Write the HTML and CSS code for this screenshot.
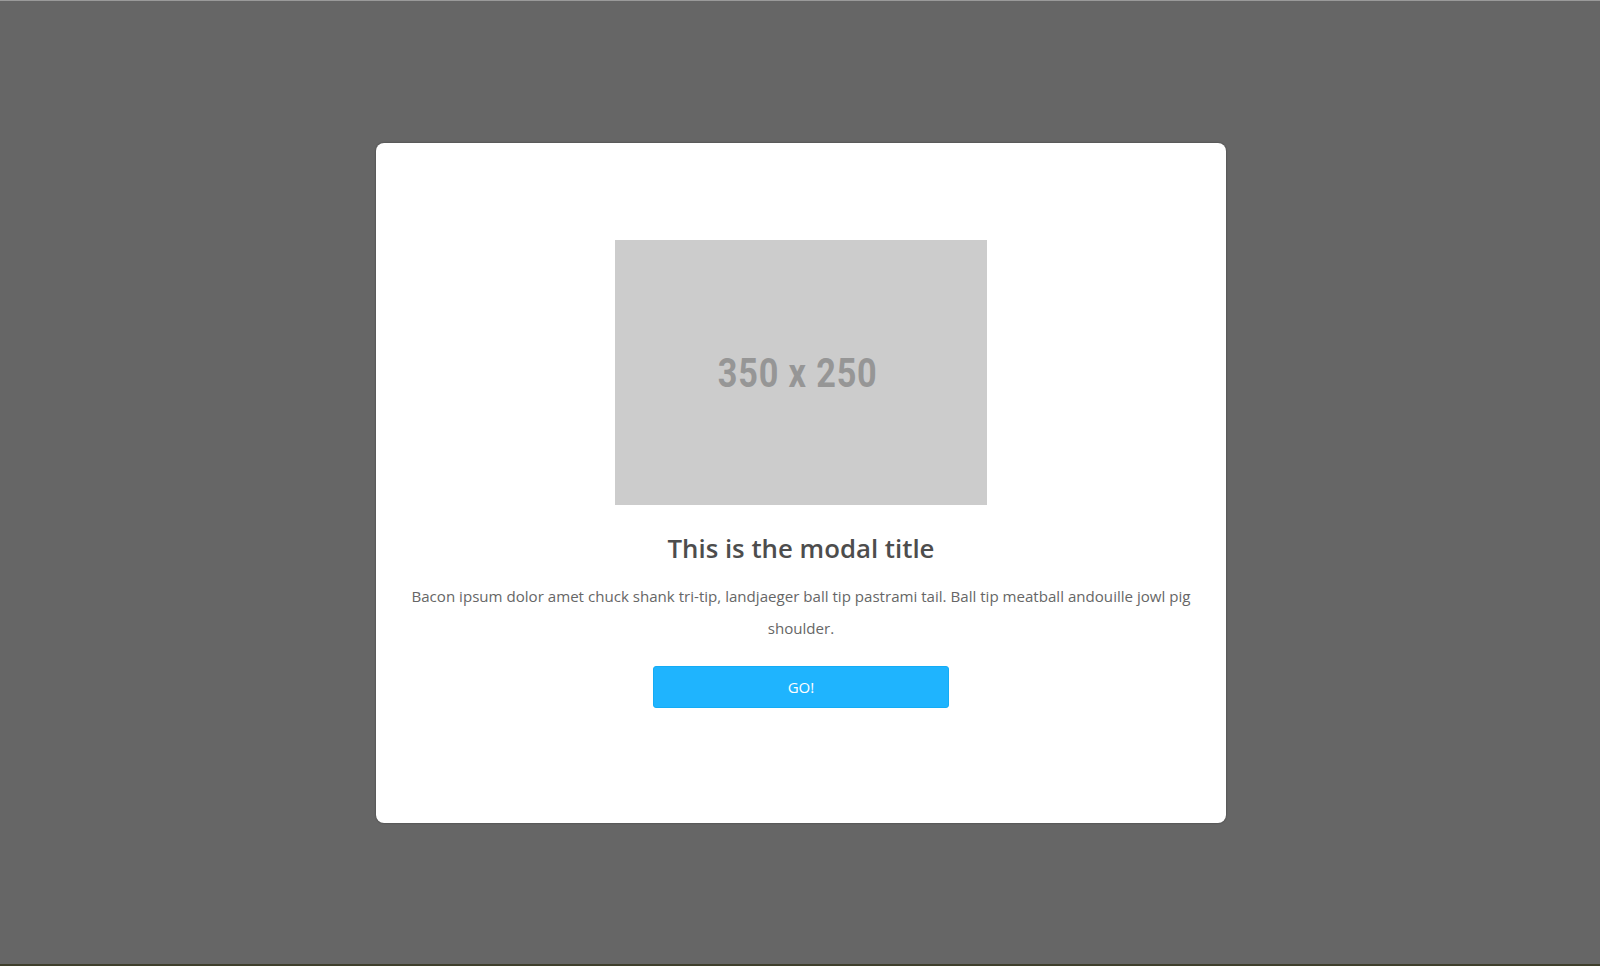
FILE: index.html
```html
<!DOCTYPE html>
<html lang="en">
<head>
<meta charset="utf-8">
<title>Modal</title>
<link rel="stylesheet" href="styles.css">
</head>
<body>
<div class="overlay">
  <div class="modal">
    <div class="placeholder"><span class="placeholder-text">350 x 250</span></div>
    <h2 class="modal-title">This is the modal title</h2>
    <p class="modal-text">Bacon ipsum dolor amet chuck shank tri-tip, landjaeger ball tip pastrami tail. Ball tip meatball andouille jowl pig shoulder.</p>
    <button class="modal-button">GO!</button>
  </div>
</div>
</body>
</html>
```
FILE: styles.css
```css
* { box-sizing: border-box; }
html, body { margin: 0; padding: 0; }
body {
  width: 1600px;
  height: 966px;
  overflow: hidden;
  background: #666666;
  font-family: "Open Sans", "Liberation Sans", sans-serif;
}
.overlay {
  width: 1600px;
  height: 966px;
  display: flex;
  align-items: center;
  justify-content: center;
  border-top: 1px solid #9a9a9a;
  border-bottom: 2px solid #3f3f2c;
}
.modal {
  width: 850px;
  height: 680px;
  background: #ffffff;
  border-radius: 8px;
  box-shadow: 0 0 2px rgba(0,0,0,0.45);
  display: flex;
  flex-direction: column;
  align-items: center;
  padding: 97px 34px 0;
  margin-left: 2px;
}
.placeholder {
  width: 372px;
  height: 265px;
  background: #cccccc;
  display: flex;
  align-items: center;
  justify-content: center;
  flex-shrink: 0;
}
.placeholder-text {
  font-family: "Roboto", "Liberation Sans", sans-serif;
  font-weight: 700;
  font-size: 41px;
  color: #969696;
  display: inline-block;
  transform: scaleX(0.835);
  letter-spacing: 1px;
  margin-left: -6px;
  margin-top: 1px;
}
.modal-title {
  margin: 24px 0 0;
  font-size: 25.8px;
  line-height: 38px;
  font-weight: 600;
  color: #4d4d4d;
  text-align: center;
}
.modal-text {
  margin: 13px 0 0;
  font-size: 15.1px;
  line-height: 32px;
  color: #666666;
  text-align: center;
}
.modal-button {
  margin-top: 22px;
  width: 296px;
  height: 42px;
  background: #1fb4fe;
  border: 1px solid #14acf5;
  border-radius: 3px;
  color: #ffffff;
  font-family: "Open Sans", "Liberation Sans", sans-serif;
  font-size: 15px;
  font-weight: 500;
  padding: 0;
}
```
